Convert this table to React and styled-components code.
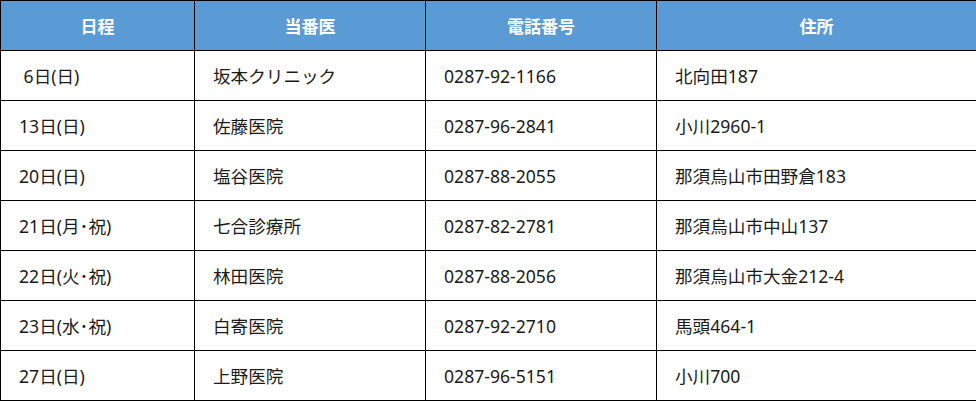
import React from 'react';
import styled, {createGlobalStyle} from 'styled-components';

const GlobalStyle = createGlobalStyle`
    html, body {
        margin: 0;
        padding: 0;
        background: #ffffff;
    }
    body {
        font-family: "Noto Sans", "Noto Sans CJK JP", sans-serif;
    }
`;

const Table = styled.table`
    width: 976px;
    border-collapse: collapse;
    table-layout: fixed;
    font-size: 17.6px;
    color: #1a1a1a;
`;

const HeadCell = styled.th`
    height: 49px;
    padding: 0;
    background: #5b9bd5;
    color: #ffffff;
    font-weight: bold;
    font-size: 17px;
    text-align: center;
    border: 1px solid #000000;
`;

const Cell = styled.td`
    height: 49px;
    padding: 0 0 0 18px;
    text-align: left;
    white-space: pre;
    border: 1px solid #000000;
`;

const rows = [
    [' 6日(日)', '坂本クリニック', '0287-92-1166', '北向田187'],
    ['13日(日)', '佐藤医院', '0287-96-2841', '小川2960-1'],
    ['20日(日)', '塩谷医院', '0287-88-2055', '那須烏山市田野倉183'],
    ['21日(月･祝)', '七合診療所', '0287-82-2781', '那須烏山市中山137'],
    ['22日(火･祝)', '林田医院', '0287-88-2056', '那須烏山市大金212-4'],
    ['23日(水･祝)', '白寄医院', '0287-92-2710', '馬頭464-1'],
    ['27日(日)', '上野医院', '0287-96-5151', '小川700'],
];

const widths = [194, 231, 231, 320];

export default function App() {
    return (
        <>
            <GlobalStyle />
            <Table>
                <colgroup>
                    {widths.map((w, i) => <col key={i} style={{width: w}} />)}
                </colgroup>
                <thead>
                    <tr>
                        <HeadCell>日程</HeadCell>
                        <HeadCell>当番医</HeadCell>
                        <HeadCell>電話番号</HeadCell>
                        <HeadCell>住所</HeadCell>
                    </tr>
                </thead>
                <tbody>
                    {rows.map((r) => (
                        <tr key={r[0]}>
                            {r.map((c, i) => <Cell key={i}>{c}</Cell>)}
                        </tr>
                    ))}
                </tbody>
            </Table>
        </>
    );
}
